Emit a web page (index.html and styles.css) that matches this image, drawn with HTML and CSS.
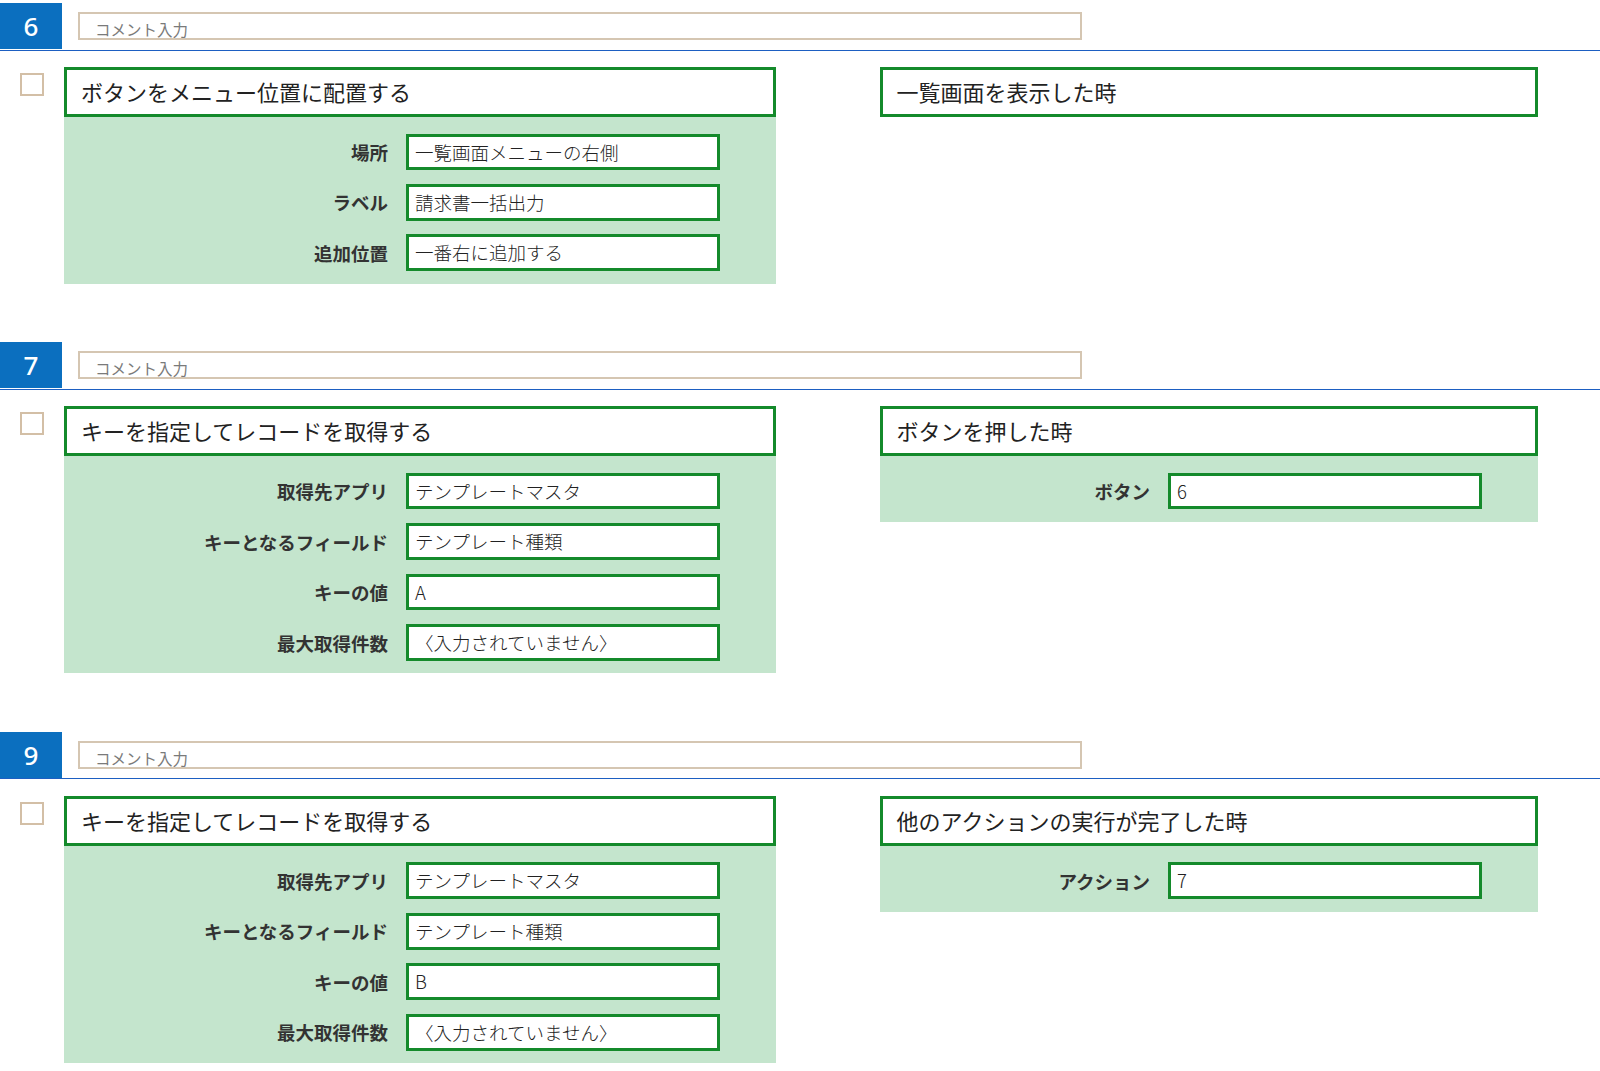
FILE: index.html
```html
<!DOCTYPE html>
<html lang="ja">
<head>
<meta charset="utf-8">
<link rel="stylesheet" href="styles.css">
</head>
<body>
<div class="page">

  <section class="step">
    <div class="step-head">
      <div class="step-num">6</div>
      <div class="comment">コメント入力</div>
    </div>
    <div class="step-body">
      <div class="check"></div>
      <div class="card card-left">
        <div class="card-title">ボタンをメニュー位置に配置する</div>
        <div class="card-fields">
          <div class="field"><span class="label">場所</span><span class="value">一覧画面メニューの右側</span></div>
          <div class="field"><span class="label">ラベル</span><span class="value">請求書一括出力</span></div>
          <div class="field"><span class="label">追加位置</span><span class="value">一番右に追加する</span></div>
        </div>
      </div>
      <div class="card card-right">
        <div class="card-title">一覧画面を表示した時</div>
      </div>
    </div>
  </section>

  <section class="step">
    <div class="step-head">
      <div class="step-num">7</div>
      <div class="comment">コメント入力</div>
    </div>
    <div class="step-body">
      <div class="check"></div>
      <div class="card card-left">
        <div class="card-title">キーを指定してレコードを取得する</div>
        <div class="card-fields">
          <div class="field"><span class="label">取得先アプリ</span><span class="value">テンプレートマスタ</span></div>
          <div class="field"><span class="label">キーとなるフィールド</span><span class="value">テンプレート種類</span></div>
          <div class="field"><span class="label">キーの値</span><span class="value">A</span></div>
          <div class="field"><span class="label">最大取得件数</span><span class="value">〈入力されていません〉</span></div>
        </div>
      </div>
      <div class="card card-right">
        <div class="card-title">ボタンを押した時</div>
        <div class="card-fields">
          <div class="field"><span class="label">ボタン</span><span class="value">6</span></div>
        </div>
      </div>
    </div>
  </section>

  <section class="step">
    <div class="step-head">
      <div class="step-num">9</div>
      <div class="comment">コメント入力</div>
    </div>
    <div class="step-body">
      <div class="check"></div>
      <div class="card card-left">
        <div class="card-title">キーを指定してレコードを取得する</div>
        <div class="card-fields">
          <div class="field"><span class="label">取得先アプリ</span><span class="value">テンプレートマスタ</span></div>
          <div class="field"><span class="label">キーとなるフィールド</span><span class="value">テンプレート種類</span></div>
          <div class="field"><span class="label">キーの値</span><span class="value">B</span></div>
          <div class="field"><span class="label">最大取得件数</span><span class="value">〈入力されていません〉</span></div>
        </div>
      </div>
      <div class="card card-right">
        <div class="card-title">他のアクションの実行が完了した時</div>
        <div class="card-fields">
          <div class="field"><span class="label">アクション</span><span class="value">7</span></div>
        </div>
      </div>
    </div>
  </section>

</div>
</body>
</html>
```

FILE: styles.css
```css
* { box-sizing: border-box; }

html, body {
  margin: 0;
  padding: 0;
  background: #ffffff;
}

body {
  font-family: "Noto Sans CJK JP", "Noto Sans", sans-serif;
  color: #222;
}

.page {
  padding-top: 3px;
  display: flex;
  flex-direction: column;
  gap: 58.6px;
}

.step-head {
  display: flex;
  align-items: flex-start;
  height: 47.5px;
  border-bottom: 1.5px solid #1d5fc2;
}

.step-num {
  width: 62px;
  height: 46px;
  background: #0b6fbf;
  color: #ffffff;
  font-family: "Noto Sans", "Open Sans", sans-serif;
  font-size: 26px;
  font-weight: 500;
  line-height: 46px;
  text-align: center;
}

.comment {
  margin-left: 16px;
  margin-top: 8.7px;
  width: 1004px;
  height: 28px;
  border: 2px solid #d5c6b2;
  padding-left: 15px;
  font-size: 15.5px;
  line-height: 31px;
  color: #7a7a7a;
  overflow: hidden;
}

.step-body {
  display: flex;
  align-items: flex-start;
  margin-top: 16.5px;
}

.check {
  width: 23.5px;
  height: 23.5px;
  margin-left: 20px;
  margin-top: 5.7px;
  border: 2px solid #d3bfa6;
  background: #fff;
  flex: none;
}

.card {
  flex: none;
}

.card-left {
  width: 711.5px;
  margin-left: 20.5px;
}

.card-right {
  width: 658px;
  margin-left: 104px;
}

.card-title {
  height: 50px;
  border: 3px solid #148a2b;
  background: #ffffff;
  padding-left: 14px;
  font-size: 22px;
  line-height: 43px;
  color: #222;
  white-space: nowrap;
}

.card-fields {
  background: #c4e5cd;
  padding: 16.5px 56px 12.5px 0;
  display: flex;
  flex-direction: column;
  gap: 13.8px;
}

.field {
  display: flex;
  justify-content: flex-end;
  align-items: center;
  gap: 18px;
}

.label {
  font-size: 18.5px;
  font-weight: 700;
  color: #333;
  white-space: nowrap;
}

.value {
  width: 313.5px;
  height: 36.7px;
  border: 3px solid #148a2b;
  background: #ffffff;
  padding-left: 6px;
  font-size: 18.5px;
  font-weight: 300;
  line-height: 31.5px;
  color: #222;
  white-space: nowrap;
  overflow: hidden;
}
```
